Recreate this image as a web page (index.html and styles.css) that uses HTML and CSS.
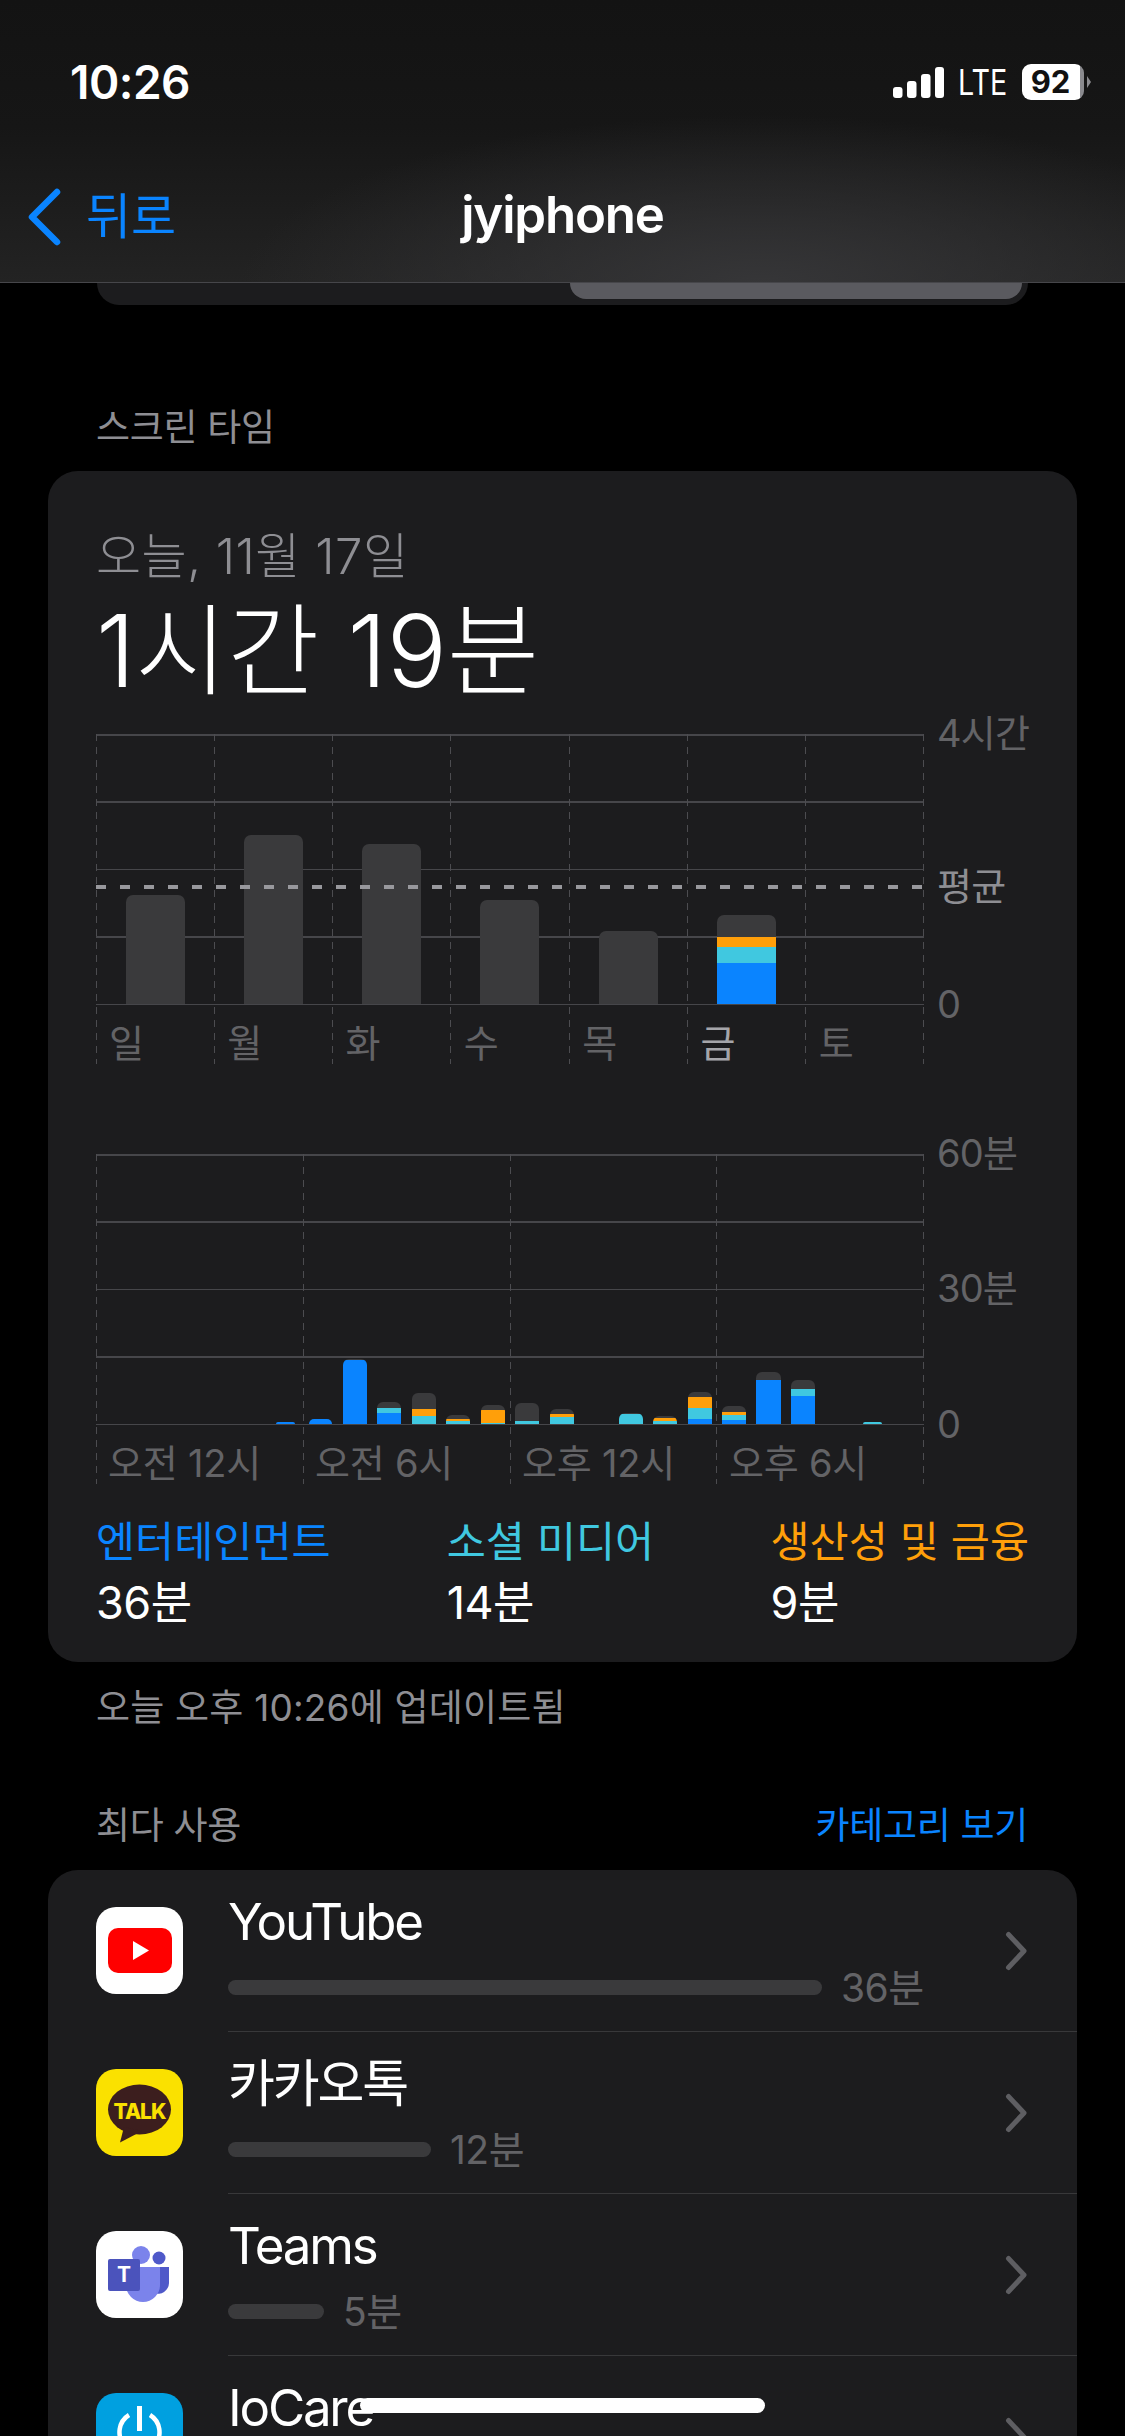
FILE: index.html
```html
<!DOCTYPE html>
<html lang="ko">
<head>
<meta charset="utf-8">
<title>jyiphone</title>
<link rel="stylesheet" href="styles.css">
</head>
<body>
<div class="app">
  <header class="top">
    <div class="status">
      <span class="time">10:26</span>
      <div class="status-right">
        <svg class="signal" width="51" height="31" viewBox="0 0 51 31"><rect x="0" y="20" width="9.500" height="11" rx="3" fill="#fff"/><rect x="14" y="14" width="9.500" height="17" rx="3" fill="#fff"/><rect x="28" y="7" width="9.500" height="24" rx="3" fill="#fff"/><rect x="42" y="0" width="9" height="31" rx="3" fill="#fff"/></svg>
        <span class="lte">LTE</span>
        <div class="battery">92</div>
        <span class="battery-tip"></span>
      </div>
    </div>
    <nav class="nav">
      <div class="back">
        <svg width="36" height="58" viewBox="0 0 36 58"><path d="M31 4 L6 29 L31 54" fill="none" stroke="#0a84ff" stroke-width="6.5" stroke-linecap="round" stroke-linejoin="round"/></svg>
        <span>뒤로</span>
      </div>
      <div class="title">jyiphone</div>
    </nav>
  </header>

  <main class="content">
    <div class="segment"><div class="segment-on"></div></div>

    <div class="section-head first"><span>스크린 타임</span></div>

    <section class="card summary">
      <div class="date">오늘, 11월 17일</div>
      <div class="total">1시간 19분</div>

      <div class="chart week">
        <div class="plot">
          <div class="hlines"><i></i><i></i><i></i><i></i><i></i></div>
          <div class="vlines"><i></i><i></i><i></i><i></i><i></i><i></i><i></i><i></i></div>
          <div class="bars bars-week">
            <div class="bar"><b class="gray" style="height:109px"></b></div>
            <div class="bar"><b class="gray" style="height:169px"></b></div>
            <div class="bar"><b class="gray" style="height:160px"></b></div>
            <div class="bar"><b class="gray" style="height:104px"></b></div>
            <div class="bar"><b class="gray" style="height:73px"></b></div>
            <div class="bar"><b class="gray" style="height:22px"></b><b class="orange" style="height:10px"></b><b class="cyan" style="height:16px"></b><b class="blue" style="height:41px"></b></div>
            <div class="bar"></div>
          </div>
          <div class="avg"></div>
          <div class="xlabels x-week"><span>일</span><span>월</span><span>화</span><span>수</span><span>목</span><span class="today">금</span><span>토</span></div>
        </div>
        <div class="ylabels y-week"><span class="y-top">4시간</span><span class="y-avg">평균</span><span class="y-zero">0</span></div>
      </div>

      <div class="chart day">
        <div class="plot">
          <div class="hlines"><i></i><i></i><i></i><i></i><i></i></div>
          <div class="vlines"><i></i><i></i><i></i><i></i><i></i></div>
          <div class="bars bars-day">
            <div class="bar"></div><div class="bar"></div><div class="bar"></div><div class="bar"></div><div class="bar"></div>
            <div class="bar small"><b class="blue" style="height:2px"></b></div>
            <div class="bar mid"><b class="blue" style="height:5px"></b></div>
            <div class="bar"><b class="gray" style="height:1px"></b><b class="blue" style="height:64px"></b></div>
            <div class="bar"><b class="gray" style="height:6px"></b><b class="cyan" style="height:5px"></b><b class="blue" style="height:11px"></b></div>
            <div class="bar"><b class="gray" style="height:16px"></b><b class="orange" style="height:7px"></b><b class="cyan" style="height:8px"></b></div>
            <div class="bar"><b class="gray" style="height:4px"></b><b class="orange" style="height:2px"></b><b class="cyan" style="height:3px"></b></div>
            <div class="bar"><b class="gray" style="height:5px"></b><b class="orange" style="height:13px"></b><b class="cyan" style="height:1px"></b></div>
            <div class="bar"><b class="gray" style="height:18px"></b><b class="cyan" style="height:3px"></b></div>
            <div class="bar"><b class="gray" style="height:5px"></b><b class="orange" style="height:3px"></b><b class="cyan" style="height:7px"></b></div>
            <div class="bar"></div>
            <div class="bar"><b class="gray" style="height:1px"></b><b class="cyan" style="height:10px"></b></div>
            <div class="bar"><b class="gray" style="height:2px"></b><b class="orange" style="height:3px"></b><b class="cyan" style="height:3px"></b></div>
            <div class="bar"><b class="gray" style="height:5px"></b><b class="orange" style="height:11px"></b><b class="cyan" style="height:11px"></b><b class="blue" style="height:5px"></b></div>
            <div class="bar"><b class="gray" style="height:6px"></b><b class="orange" style="height:3px"></b><b class="cyan" style="height:5px"></b><b class="blue" style="height:4px"></b></div>
            <div class="bar wide"><b class="gray" style="height:8px"></b><b class="blue" style="height:44px"></b></div>
            <div class="bar"><b class="gray" style="height:9px"></b><b class="cyan" style="height:7px"></b><b class="blue" style="height:28px"></b></div>
            <div class="bar"></div>
            <div class="bar small"><b class="cyan" style="height:2px"></b></div>
            <div class="bar"></div>
          </div>
          <div class="xlabels x-day"><span>오전 12시</span><span>오전 6시</span><span>오후 12시</span><span>오후 6시</span></div>
        </div>
        <div class="ylabels y-day"><span class="y-top">60분</span><span class="y-mid">30분</span><span class="y-zero">0</span></div>
      </div>

      <div class="legend">
        <div class="legend-item"><div class="legend-name c-blue">엔터테인먼트</div><div class="legend-val">36분</div></div>
        <div class="legend-item"><div class="legend-name c-cyan">소셜 미디어</div><div class="legend-val">14분</div></div>
        <div class="legend-item"><div class="legend-name c-orange">생산성 및 금융</div><div class="legend-val">9분</div></div>
      </div>
    </section>

    <p class="updated">오늘 오후 10:26에 업데이트됨</p>

    <div class="section-head most"><span>최다 사용</span><a class="link">카테고리 보기</a></div>

    <section class="card apps">
      <div class="row">
        <div class="icon icon-white">
          <svg width="87" height="87" viewBox="0 0 87 87"><rect x="12" y="21" width="64" height="45" rx="10" fill="#ff0000"/><path d="M37 34 L37 53 L53 43.500 Z" fill="#fff"/></svg>
        </div>
        <div class="row-body">
          <div class="app-name">YouTube</div>
          <div class="usage"><div class="usage-bar" style="width:594px"></div><span>36분</span></div>
        </div>
        <svg class="chev" width="24" height="40" viewBox="0 0 24 40"><path d="M3.500 3.500 L19 20 L3.500 36.500" fill="none" stroke="#5e5e62" stroke-width="5" stroke-linecap="round" stroke-linejoin="round"/></svg>
      </div>
      <div class="row">
        <div class="icon icon-kakao">
          <svg width="87" height="87" viewBox="0 0 87 87"><ellipse cx="43.500" cy="40.500" rx="31.500" ry="25" fill="#3c1e1e"/><path d="M28 58 L24 73.500 L46 62 Z" fill="#3c1e1e"/><text x="43.500" y="49.500" text-anchor="middle" class="talk">TALK</text></svg>
        </div>
        <div class="row-body">
          <div class="app-name">카카오톡</div>
          <div class="usage"><div class="usage-bar" style="width:203px"></div><span>12분</span></div>
        </div>
        <svg class="chev" width="24" height="40" viewBox="0 0 24 40"><path d="M3.500 3.500 L19 20 L3.500 36.500" fill="none" stroke="#5e5e62" stroke-width="5" stroke-linecap="round" stroke-linejoin="round"/></svg>
      </div>
      <div class="row">
        <div class="icon icon-white">
          <svg width="87" height="87" viewBox="0 0 87 87"><circle cx="63" cy="27" r="6.500" fill="#4f59c9"/><path d="M58 36 H73 V52 A11 11 0 0 1 58 62 Z" fill="#4f59c9"/><circle cx="45" cy="24" r="9" fill="#7b83eb"/><path d="M30 36 H64 V54 A17 17 0 0 1 30 54 Z" fill="#7b83eb"/><rect x="12" y="28" width="32" height="32" rx="2" fill="#4b53bc"/><text x="28" y="51" text-anchor="middle" class="teams-t">T</text></svg>
        </div>
        <div class="row-body">
          <div class="app-name">Teams</div>
          <div class="usage"><div class="usage-bar" style="width:96px"></div><span>5분</span></div>
        </div>
        <svg class="chev" width="24" height="40" viewBox="0 0 24 40"><path d="M3.500 3.500 L19 20 L3.500 36.500" fill="none" stroke="#5e5e62" stroke-width="5" stroke-linecap="round" stroke-linejoin="round"/></svg>
      </div>
      <div class="row">
        <div class="icon icon-blue">
          <svg width="87" height="87" viewBox="0 0 87 87"><path d="M43.500 13 V38" stroke="#fff" stroke-width="5" fill="none"/><path d="M33 22 A20 20 0 1 0 54 22" stroke="#fff" stroke-width="4.500" fill="none"/></svg>
        </div>
        <div class="row-body">
          <div class="app-name">IoCare</div>
        </div>
        <svg class="chev" width="24" height="40" viewBox="0 0 24 40"><path d="M3.500 3.500 L19 20 L3.500 36.500" fill="none" stroke="#5e5e62" stroke-width="5" stroke-linecap="round" stroke-linejoin="round"/></svg>
      </div>
    </section>
  </main>

  <div class="home-indicator"></div>
</div>
</body>
</html>
```

FILE: styles.css
```css
* { box-sizing: border-box; }
html, body { margin: 0; padding: 0; background: #000; }
body { font-family: "Inter", "Noto Sans CJK KR", "Liberation Sans", sans-serif; color: #fff; }
.app { position: relative; width: 1125px; height: 2436px; overflow: hidden; background: #000; }

/* top bar */
.top {
  height: 283px;
  border-bottom: 1px solid #46464a;
  background:
    radial-gradient(ellipse 520px 170px at 760px 285px, #363638 0%, rgba(54,54,56,0) 100%),
    linear-gradient(180deg, #131313 0%, #161616 45%, #232323 100%);
  position: relative;
  z-index: 2;
}
.status { height: 164px; padding: 59px 34px 0 70px; display: flex; justify-content: space-between; align-items: flex-start; }
.time { font: 600 46px/46px "Inter", sans-serif; letter-spacing: -0.5px; }
.status-right { display: flex; align-items: center; height: 46px; }
.signal { display: block; margin-top: 1px; }
.lte { font: 400 35px/46px "Inter", sans-serif; margin-left: 14px; transform: scaleX(.82); transform-origin: left; width: 50px; }
.battery {
  width: 62px; height: 36px; border-radius: 9px; margin-left: 14px;
  background: linear-gradient(90deg, #fff 58px, #8a8a8e 58px);
  color: #111; font: 700 31px/36px "Inter", sans-serif; text-align: center; padding-right: 5px;
}
.battery-tip { width: 0; height: 0; border-left: 4px solid #8a8a8e; border-top: 6px solid transparent; border-bottom: 6px solid transparent; margin-left: 3px; }
.nav { height: 118px; position: relative; display: flex; align-items: flex-start; justify-content: center; }
.back { position: absolute; left: 26px; top: 24px; display: flex; align-items: center; color: #0a84ff; font-size: 49px; line-height: 58px; gap: 24px; }
.title { font: 600 51px/60px "Inter", "Liberation Sans", sans-serif; margin-top: 21px; letter-spacing: -1.2px; }

/* content */
.content { display: flex; flex-direction: column; }
.segment { margin: 0 97px; height: 22px; background: #1c1c1e; border-radius: 0 0 26px 26px; display: flex; justify-content: flex-end; padding: 0 6px 6px 0; }
.segment-on { width: 452px; background: #5a5a5f; border-radius: 0 0 20px 20px; }
.section-head { display: flex; justify-content: space-between; margin: 0 97px 0 96px; font-size: 37px; line-height: 44px; color: #8e8e93; letter-spacing: -.3px; }
.section-head.first { margin-top: 101px; }
.section-head.most { margin-top: 73px; }
.link { color: #0a84ff; }
.card { background: #1c1c1e; border-radius: 30px; margin: 0 48px; }
.summary { margin-top: 21px; height: 1191px; padding: 55px 48px 0; }
.date { font-size: 49px; line-height: 62px; color: #8e8e93; font-weight: 300; letter-spacing: .5px; }
.total { font-size: 100px; line-height: 116px; font-weight: 300; letter-spacing: 0; margin-top: 5px; }

/* charts */
.chart { display: flex; position: relative; }
.week { margin-top: 25px; }
.day { margin-top: 90px; }
.plot { position: relative; width: 828px; height: 330px; }
.hlines { position: absolute; left: 0; right: 0; top: 0; height: 271px; display: flex; flex-direction: column; justify-content: space-between; }
.hlines i { display: block; height: 1.500px; background: #46464a; }
.vlines { position: absolute; left: 0; right: 0; top: 0; bottom: 0; display: flex; justify-content: space-between; }
.vlines i { display: block; width: 1px; background: repeating-linear-gradient(180deg, #4c4c50 0 7px, transparent 7px 13px); }
.avg { position: absolute; left: 0; right: 0; top: 151px; height: 4px; background: repeating-linear-gradient(90deg, #98989d 0 10px, transparent 10px 24px); }
.bars { position: absolute; left: 0; right: 0; top: 0; height: 270px; display: grid; align-items: end; justify-items: center; }
.bars-week { grid-template-columns: repeat(7, 1fr); }
.bars-day { grid-template-columns: repeat(24, 1fr); }
.bar { display: flex; flex-direction: column; width: 59px; border-radius: 7px 7px 0 0; overflow: hidden; }
.bars-day .bar { width: 24px; border-radius: 6px 6px 0 0; }
.bars-day .bar.small { width: 19px; }
.bars-day .bar.mid { width: 23px; }
.bars-day .bar.wide { width: 25px; }
.bar b { display: block; }
.gray { background: #3a3a3c; }
.orange { background: #ff9f0a; }
.cyan { background: #40c8e0; }
.blue { background: #0a84ff; }
.xlabels { position: absolute; left: 0; right: 0; top: 271px; height: 59px; display: grid; color: #636366; font-size: 38px; line-height: 59px; }
.x-week { grid-template-columns: repeat(7, 1fr); }
.x-day { grid-template-columns: repeat(4, 1fr); }
.xlabels span { padding-left: 13px; white-space: nowrap; padding-top: 9px; }
.x-day span { padding-left: 12px; letter-spacing: -.2px; }
.today { color: #a5a5aa; }
.ylabels { position: absolute; left: 841px; top: 0; height: 271px; width: 100px; font-size: 38px; color: #636366; line-height: 44px; }
.ylabels span { position: absolute; left: 0; white-space: nowrap; letter-spacing: -.8px; }
.y-top { top: -23px; }
.y-avg { top: 130px; color: #8e8e93; }
.y-mid { top: 112px; }
.y-zero { top: 248px; }

/* legend */
.legend { display: flex; margin-top: 31px; }
.legend-item:nth-child(1) { width: 351px; }
.legend-item:nth-child(2) { width: 324px; }
.legend-item:nth-child(3) { flex: 1; white-space: nowrap; }
.legend-name { font-size: 42.500px; line-height: 54px; }
.legend-val { font-size: 45px; line-height: 60px; margin-top: 4px; letter-spacing: -.5px; }
.c-blue { color: #0a84ff; }
.c-cyan { color: #40c8e0; }
.c-orange { color: #ff9f0a; }

.updated { margin: 23px 97px 0 96px; font-size: 37px; line-height: 46px; color: #8e8e93; letter-spacing: .2px; }

/* app list */
.apps { margin-top: 22px; height: 800px; padding-left: 48px; }
.row { display: flex; height: 162px; align-items: flex-start; }
.icon { flex: none; width: 87px; height: 87px; border-radius: 20px; margin-top: 37px; overflow: hidden; }
.icon svg { display: block; }
.icon-white { background: #fff; }
.icon-kakao { background: #fae100; }
.icon-blue { background: #00a0e0; }
.talk { font: 800 21px "Inter", "Liberation Sans", sans-serif; fill: #fae100; letter-spacing: -1px; }
.teams-t { font: 700 21px "Inter", "Liberation Sans", sans-serif; fill: #fff; }
.row-body { flex: 1; margin-left: 45px; height: 162px; border-bottom: 1.500px solid #38383a; padding-top: 19px; }
.row:last-child .row-body { border-bottom: 0; }
.app-name { font: 400 51px/66px "Inter", "Noto Sans CJK KR", sans-serif; letter-spacing: -2.200px; }
.usage { display: flex; align-items: center; gap: 19px; height: 44px; margin-top: 10px; color: #636366; font-size: 39px; letter-spacing: -.5px; }
.usage span { margin-top: -4px; }
.usage-bar { height: 15px; border-radius: 8px; background: #3a3a3c; }
.chev { position: absolute; left: 1005px; margin-top: 61px; }
.home-indicator { position: absolute; left: 360px; top: 2398px; width: 405px; height: 15px; border-radius: 8px; background: #fff; z-index: 3; }
```
